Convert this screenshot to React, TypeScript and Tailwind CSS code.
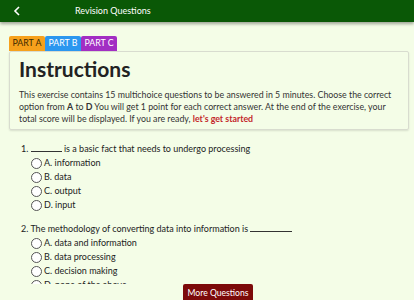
import React from 'react';

const questions = [
  {
    text: (
      <>
        1. <span className="inline-block w-[31px] border-b border-[#333] align-baseline"></span> is a basic fact that needs to undergo processing
      </>
    ),
    options: ['A. information', 'B. data', 'C. output', 'D. input'],
  },
  {
    text: (
      <>
        2. The methodology of converting data into information is <span className="inline-block w-[42px] border-b border-[#333] align-baseline"></span>
      </>
    ),
    options: ['A. data and information', 'B. data processing', 'C. decision making', 'D. none of the above'],
  },
];

const App: React.FC = () => {
  return (
    <div
      className="w-[414px] h-[300px] overflow-hidden flex flex-col bg-[#f4fde7] text-[#222]"
      style={{ fontFamily: 'Lato, "Open Sans", sans-serif' }}
    >
      {/* Barre du haut */}
      <div className="h-[22px] shrink-0 bg-[#0a5806] flex items-center text-white shadow-[0_2px_3px_rgba(0,0,0,0.35)] relative z-10">
        <svg className="ml-[13px] w-[8px] h-[10px]" viewBox="0 0 8 10" fill="none">
          <path d="M6 1 L2 5 L6 9" stroke="white" strokeWidth="1.6" />
        </svg>
        <span className="ml-[54px] text-[9px]">Revision Questions</span>
      </div>

      <div className="flex-1 overflow-hidden px-[9px] pt-[14px]">
        {/* Onglets */}
        <div className="flex text-[8.8px] leading-none">
          <div className="w-[36px] h-[15px] flex items-center justify-center bg-[#f6a11c] text-[#3a2a00] rounded-t-[2px]">PART A</div>
          <div className="w-[36px] h-[15px] flex items-center justify-center bg-[#2b97ef] text-white rounded-t-[2px]">PART B</div>
          <div className="w-[36px] h-[15px] flex items-center justify-center bg-[#a22ec3] text-white rounded-t-[2px]">PART C</div>
        </div>

        {/* Instructions */}
        <div className="w-[400px] h-[79px] border border-[#d8dccf] rounded-[2px] shadow-[0_1px_2px_rgba(0,0,0,0.12)] px-[9px] pt-[5px]">
          <h1 className="text-[21px] font-bold leading-[24px] text-[#222]">Instructions</h1>
          <p className="mt-[8px] text-[8.8px] leading-[12px] text-[#333] whitespace-nowrap">
            This exercise contains 15 multichoice questions to be answered in 5 minutes. Choose the correct
            <br />
            option from <b>A</b> to <b>D</b> You will get 1 point for each correct answer. At the end of the exercise, your
            <br />
            total score will be displayed. If you are ready, <b className="text-[#c3272b]">let's get started</b>
          </p>
        </div>

        {/* Questions */}
        <div className="pl-[12px] pt-[12px] text-[9px] text-[#222]">
          {questions.map((q, i) => (
            <div key={i} className={i > 0 ? 'mt-[10px]' : ''}>
              <div className="leading-[14px]">{q.text}</div>
              <div className="pl-[10px]">
                {q.options.map((o) => (
                  <div key={o} className="flex items-center h-[14px]">
                    <span className="w-[11px] h-[11px] rounded-full border border-[#555] bg-white mr-[2px] shrink-0"></span>
                    <span>{o}</span>
                  </div>
                ))}
              </div>
            </div>
          ))}
        </div>
      </div>

      {/* Bas */}
      <div className="h-[16px] shrink-0 relative">
        <button className="absolute left-[183px] top-0 w-[70px] h-[18px] bg-[#7c0a0a] text-white text-[8.6px] rounded-[2px]">
          More Questions
        </button>
      </div>
    </div>
  );
};

export default App;
